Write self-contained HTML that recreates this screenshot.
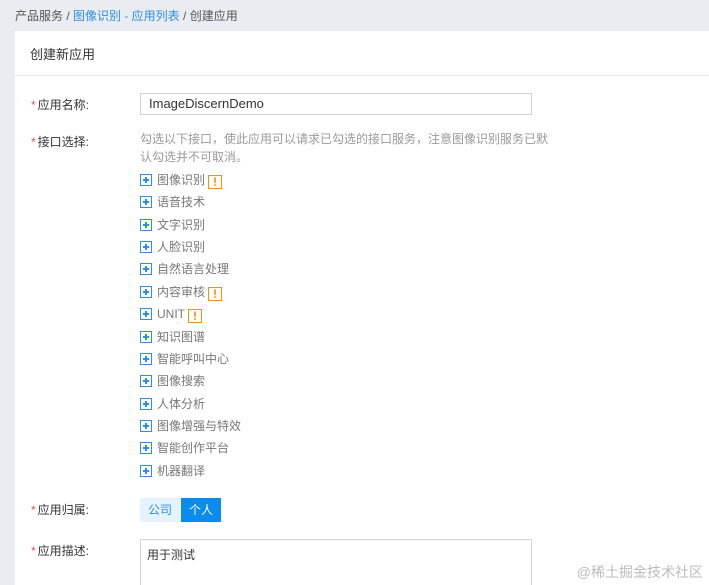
<!DOCTYPE html>
<html><head><meta charset="utf-8"><style>
*{margin:0;padding:0;box-sizing:border-box}
html,body{width:709px;height:585px;overflow:hidden}
body{background:#e9edf1;font-family:"Liberation Sans","Noto Sans CJK SC",sans-serif;font-size:12px;color:#333;position:relative}
.abs{position:absolute;white-space:nowrap}
.bc{left:15px;top:7px;color:#555}
.bc a{color:#2f8ee8;text-decoration:none}
.panel{position:absolute;left:15px;top:31px;width:694px;height:560px;background:#fff}
.hd{position:absolute;left:30px;top:44px;font-size:13px;color:#333}
.line{position:absolute;left:15px;top:75px;width:694px;height:1px;background:#e6e8eb}
.lab{left:31px;color:#333}
.lab i{color:#f04d4d;font-style:normal;margin-right:2px}
.inp{position:absolute;left:140px;top:93px;width:392px;height:22px;border:1px solid #cfd2d6;padding-left:8px;line-height:20px;font-size:13px;color:#333}
.tip{left:140px;top:130px;color:#999;line-height:18px;white-space:normal;width:410px}
.it{position:absolute;left:140px;height:16px;line-height:16px;color:#777}
.it .b{position:absolute;left:0;top:2px;width:12px;height:12px;border:1px solid #2f8ee8}
.it .b:before{content:"";position:absolute;left:2px;top:4px;width:6px;height:2px;background:#2f8ee8}
.it .b:after{content:"";position:absolute;left:4px;top:2px;width:2px;height:6px;background:#2f8ee8}
.it span.t{position:absolute;left:17px;top:0;white-space:nowrap}
.ex{display:inline-block;width:14px;height:14px;border:1px solid #f5900a;color:#f5900a;font-size:12px;font-weight:bold;line-height:12px;text-align:center;margin-left:3px;vertical-align:-2px}
.btn{position:absolute;top:498px;height:24px;line-height:24px;width:40px;text-align:center;font-size:12px}
.ta{position:absolute;left:140px;top:539px;width:392px;height:50px;border:1px solid #cfd2d6;padding:6px 6px;color:#333}
.wm{right:6px;top:562px;color:#b9bcc0;font-size:14px}
</style></head><body>
<div class="abs bc">产品服务 / <a>图像识别 - 应用列表</a> / 创建应用</div>
<div class="panel"></div>
<div class="abs hd">创建新应用</div>
<div class="line"></div>
<div class="abs lab" style="top:96px"><i>*</i>应用名称:</div>
<div class="inp">ImageDiscernDemo</div>
<div class="abs lab" style="top:133px"><i>*</i>接口选择:</div>
<div class="abs tip">勾选以下接口，使此应用可以请求已勾选的接口服务，注意图像识别服务已默认勾选并不可取消。</div>
<div class="it" style="top:172px"><div class="b"></div><span class="t">图像识别<span class="ex">!</span></span></div>
<div class="it" style="top:194px"><div class="b"></div><span class="t">语音技术</span></div>
<div class="it" style="top:217px"><div class="b"></div><span class="t">文字识别</span></div>
<div class="it" style="top:239px"><div class="b"></div><span class="t">人脸识别</span></div>
<div class="it" style="top:261px"><div class="b"></div><span class="t">自然语言处理</span></div>
<div class="it" style="top:284px"><div class="b"></div><span class="t">内容审核<span class="ex">!</span></span></div>
<div class="it" style="top:306px"><div class="b"></div><span class="t">UNIT<span class="ex">!</span></span></div>
<div class="it" style="top:329px"><div class="b"></div><span class="t">知识图谱</span></div>
<div class="it" style="top:351px"><div class="b"></div><span class="t">智能呼叫中心</span></div>
<div class="it" style="top:373px"><div class="b"></div><span class="t">图像搜索</span></div>
<div class="it" style="top:396px"><div class="b"></div><span class="t">人体分析</span></div>
<div class="it" style="top:418px"><div class="b"></div><span class="t">图像增强与特效</span></div>
<div class="it" style="top:440px"><div class="b"></div><span class="t">智能创作平台</span></div>
<div class="it" style="top:463px"><div class="b"></div><span class="t">机器翻译</span></div>
<div class="abs lab" style="top:501px"><i>*</i>应用归属:</div>
<div class="btn" style="left:140px;background:#e4f3fe;color:#2f8ee8">公司</div>
<div class="btn" style="left:181px;background:#0a8cee;color:#fff">个人</div>
<div class="abs lab" style="top:542px"><i>*</i>应用描述:</div>
<div class="ta">用于测试</div>
<div class="abs wm">@稀土掘金技术社区</div>
</body></html>
